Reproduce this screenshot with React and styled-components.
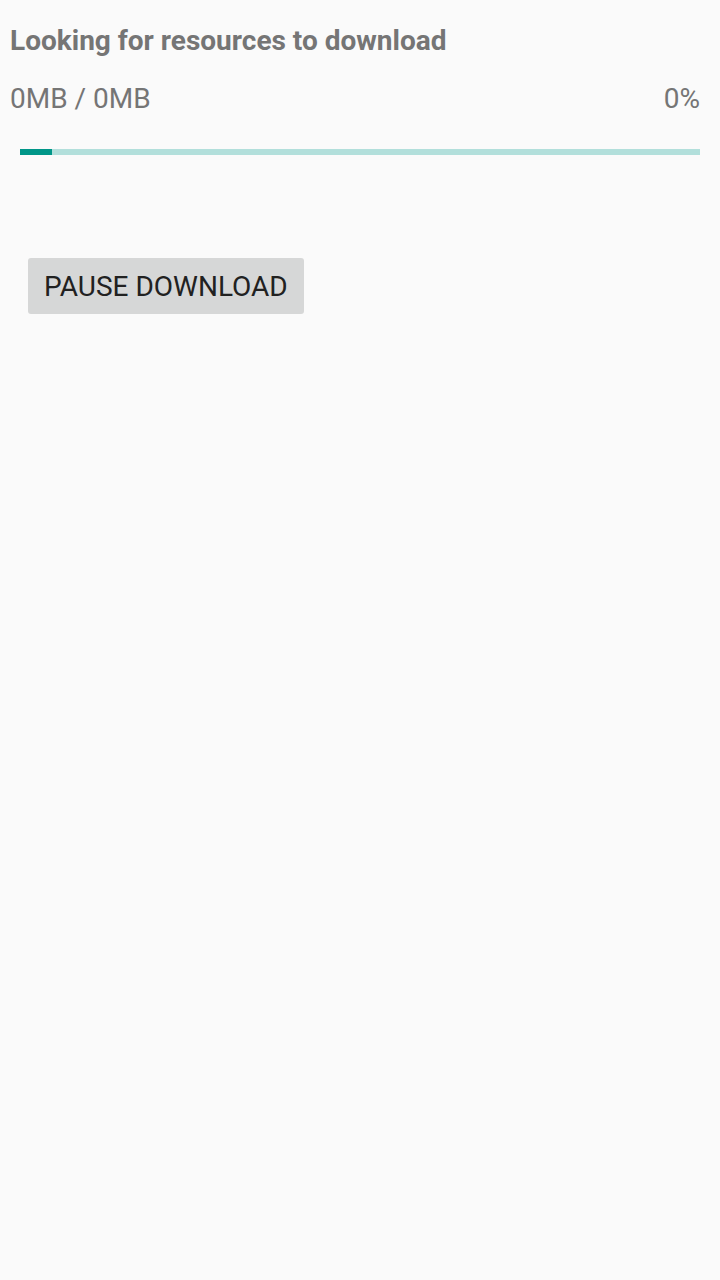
import React from "react";
import styled, { createGlobalStyle } from "styled-components";

const GlobalStyle = createGlobalStyle`
  html, body {
    margin: 0;
    padding: 0;
    background: #fafafa;
  }
  body {
    font-family: Roboto, "Liberation Sans", sans-serif;
  }
`;

const Screen = styled.div`
  min-height: 1280px;
  background: #fafafa;
  padding: 23px 20px 0 10px;
  box-sizing: border-box;
`;

const Title = styled.h1`
  margin: 0;
  font-size: 28px;
  font-weight: 700;
  line-height: 36px;
  color: #757575;
`;

const StatusRow = styled.div`
  display: flex;
  justify-content: space-between;
  align-items: center;
  margin-top: 22px;
  font-size: 28px;
  line-height: 36px;
  color: #757575;
`;

const Track = styled.div`
  margin: 32px 0 0 10px;
  height: 6px;
  background: #b2dfdb;
`;

const Fill = styled.div`
  height: 100%;
  background: #009688;
`;

const Button = styled.button`
  margin: 103px 0 0 18px;
  padding: 1px 16px 0;
  height: 56px;
  border: none;
  border-radius: 3px;
  background: #d6d7d7;
  color: #212121;
  font-family: Roboto, "Liberation Sans", sans-serif;
  font-size: 28px;
  font-weight: 400;
  letter-spacing: 0;
  cursor: pointer;
`;

const App = () => {
  const progress = 32 / 680;
  return (
    <>
      <GlobalStyle />
      <Screen>
        <Title>Looking for resources to download</Title>
        <StatusRow>
          <span>0MB / 0MB</span>
          <span>0%</span>
        </StatusRow>
        <Track>
          <Fill style={{ width: `${progress * 100}%` }} />
        </Track>
        <Button>PAUSE DOWNLOAD</Button>
      </Screen>
    </>
  );
};

export default App;
